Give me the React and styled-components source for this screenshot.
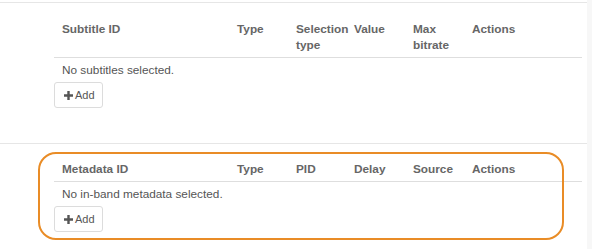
import React from 'react';
import styled, { createGlobalStyle } from 'styled-components';

const GlobalStyle = createGlobalStyle`
  html, body {
    margin: 0;
    padding: 0;
    background: #f7f7f7;
    font-family: 'Liberation Sans', Arial, sans-serif;
  }
`;

const subtitleColumns = ['Subtitle ID', 'Type', 'Selection type', 'Value', 'Max bitrate', 'Actions'];
const metadataColumns = ['Metadata ID', 'Type', 'PID', 'Delay', 'Source', 'Actions'];
const widths = [175, 59, 58, 59, 59, 118];

const Page = styled.div`
  display: flex;
  width: 592px;
  height: 249px;
  overflow: hidden;
`;

const Main = styled.div`
  width: 587px;
  background: #fff;
  padding-top: 2px;
  box-sizing: border-box;
`;

const Panel = styled.section`
  position: relative;
  border-top: 1px solid #e6e6e6;
  padding: ${(p) => p.$top}px 0 0 54px;
  height: ${(p) => p.$height}px;
  box-sizing: border-box;
`;

const Table = styled.table`
  width: 528px;
  border-collapse: collapse;
  table-layout: fixed;
  font-size: 11.8px;
`;

const Th = styled.th`
  text-align: left;
  vertical-align: top;
  font-weight: bold;
  color: #666;
  line-height: 16px;
  padding: 5px 8px 4px;
  border-bottom: 1px solid #dedede;
  box-sizing: border-box;
`;

const Td = styled.td`
  color: #555;
  line-height: 16px;
  padding: 4px 8px;
`;

const AddButton = styled.button`
  display: flex;
  align-items: center;
  gap: 2px;
  height: 26px;
  width: 49px;
  padding: 0 0 0 9px;
  background: #fff;
  border: 1px solid #dcdcdc;
  border-radius: 3px;
  color: #555;
  font-family: 'Liberation Sans', Arial, sans-serif;
  font-size: 11px;
  box-sizing: border-box;
`;

const Highlight = styled.div`
  position: absolute;
  left: 38px;
  top: 8px;
  width: 526px;
  height: 88px;
  border: 2.5px solid #e98c26;
  border-radius: 18px;
  box-sizing: border-box;
  pointer-events: none;
`;

const Strip = styled.div`
  flex: 1;
  background: #f7f7f7;
`;

const Plus = () => (
  <svg width="9" height="9" viewBox="0 0 9 9">
    <path d="M3.3 0h2.4v3.3H9v2.4H5.7V9H3.3V5.7H0V3.3h3.3z" fill="#555" />
  </svg>
);

const Section = ({ columns, empty }) => (
  <>
    <Table>
      <colgroup>
        {widths.map((w, i) => (
          <col key={i} style={{ width: w }} />
        ))}
      </colgroup>
      <thead>
        <tr>
          {columns.map((c) => (
            <Th key={c}>{c}</Th>
          ))}
        </tr>
      </thead>
      <tbody>
        <tr>
          <Td colSpan={6}>{empty}</Td>
        </tr>
      </tbody>
    </Table>
    <AddButton>
      <Plus />
      Add
    </AddButton>
  </>
);

export default function App() {
  return (
    <>
      <GlobalStyle />
      <Page>
        <Main>
          <Panel $top={13} $height={141}>
            <Section columns={subtitleColumns} empty="No subtitles selected." />
          </Panel>
          <Panel $top={12} $height={110}>
            <Highlight />
            <Section columns={metadataColumns} empty="No in-band metadata selected." />
          </Panel>
        </Main>
        <Strip />
      </Page>
    </>
  );
}
